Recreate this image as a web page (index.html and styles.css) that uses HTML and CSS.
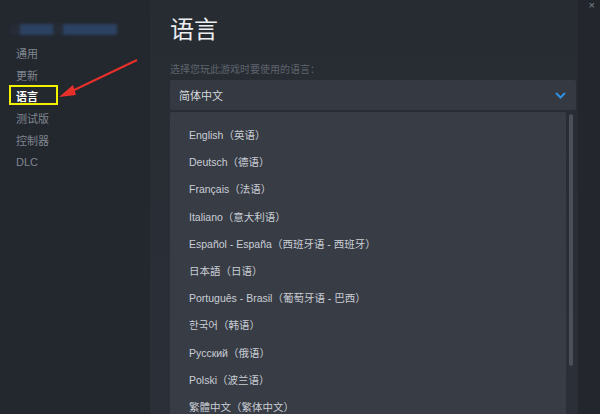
FILE: index.html
```html
<!DOCTYPE html>
<html lang="zh-CN">
<head>
    <meta charset="UTF-8">
    <meta name="viewport" content="width=device-width, initial-scale=1.0">
    <title>语言</title>
    <link rel="stylesheet" href="styles.css">
</head>
<body>
    <div class="window">
        <div class="sidebar">
            <div class="game-title">
                <span class="blur-block short"></span>
                <span class="blur-block long"></span>
            </div>
            <ul class="nav">
                <li class="nav-item">通用</li>
                <li class="nav-item">更新</li>
                <li class="nav-item active"><span class="highlight">语言</span></li>
                <li class="nav-item">测试版</li>
                <li class="nav-item">控制器</li>
                <li class="nav-item">DLC</li>
            </ul>
        </div>

        <div class="main">
            <h1 class="title">语言</h1>
            <p class="label">选择您玩此游戏时要使用的语言：</p>

            <div class="select">
                <span>简体中文</span>
                <svg class="chevron" width="11" height="7" viewBox="0 0 11 7">
                    <path d="M1 1 L5.5 5.5 L10 1" fill="none" stroke="#2f8fe0" stroke-width="2"/>
                </svg>
            </div>

            <div class="dropdown">
                <ul class="options">
                    <li>English（英语）</li>
                    <li>Deutsch（德语）</li>
                    <li>Français（法语）</li>
                    <li>Italiano（意大利语）</li>
                    <li>Español - España（西班牙语 - 西班牙）</li>
                    <li>日本語（日语）</li>
                    <li>Português - Brasil（葡萄牙语 - 巴西）</li>
                    <li>한국어（韩语）</li>
                    <li>Русский（俄语）</li>
                    <li>Polski（波兰语）</li>
                    <li>繁體中文（繁体中文）</li>
                </ul>
                <div class="scroll-track">
                    <div class="scroll-thumb"></div>
                </div>
            </div>
        </div>

        <div class="edge">
            <span class="close">×</span>
        </div>

        <!-- annotation arrow -->
        <svg class="arrow" width="600" height="414" viewBox="0 0 600 414">
            <line x1="137" y1="60" x2="70" y2="92" stroke="#e8302a" stroke-width="2"/>
            <polygon points="59,97 73,85 76,95" fill="#e8302a"/>
        </svg>
    </div>
</body>
</html>
```

FILE: styles.css
```css
html, body {
    margin: 0;
    padding: 0;
    height: 100%;
    overflow: hidden;
}
body {
    font-family: 'Liberation Sans', 'Noto Sans CJK SC', sans-serif;
    background-color: #22262d;
    color: #c6ccd4;
}
.window {
    position: relative;
    display: flex;
    height: 414px;
    width: 600px;
}
.sidebar {
    width: 150px;
    background-color: #23272e;
    padding-top: 24px;
    box-sizing: border-box;
}
.game-title {
    display: flex;
    gap: 10px;
    margin-left: 10px;
    width: 107px;
    height: 11px;
    padding-left: 10px;
    box-sizing: border-box;
    background-color: #262c36;
    border-radius: 2px;
    filter: blur(1.5px);
}
.blur-block {
    display: block;
    height: 11px;
    background-color: #2b4262;
}
.blur-block.short {
    width: 33px;
}
.blur-block.long {
    width: 54px;
}
.nav {
    list-style: none;
    margin: 9px 0 0 0;
    padding: 0;
}
.nav-item {
    height: 21.7px;
    line-height: 21.7px;
    padding-left: 16px;
    font-size: 11px;
    color: #7f868f;
}
.nav-item.active {
    color: #ffffff;
    font-weight: bold;
    position: relative;
}
.highlight {
    position: relative;
}
.highlight::after {
    content: '';
    position: absolute;
    left: -7px;
    top: -6px;
    width: 45px;
    height: 16px;
    border: 2px solid #f2f200;
}
.main {
    width: 428px;
    padding: 0 2px 0 20px;
    box-sizing: border-box;
    background: linear-gradient(180deg, #272b32 0%, #2b2f37 100%);
}
.title {
    margin: 15px 0 0 0;
    height: 30px;
    line-height: 30px;
    font-size: 24px;
    font-weight: normal;
    color: #eceef0;
}
.label {
    margin: 18px 0 0 0;
    font-size: 10px;
    line-height: 14px;
    color: #5e646d;
}
.select {
    display: flex;
    align-items: center;
    justify-content: space-between;
    margin-top: 3px;
    height: 30px;
    padding: 0 10px 0 9px;
    background-color: #353941;
    border-radius: 2px;
    font-size: 11px;
    color: #d5d9de;
}
.dropdown {
    display: flex;
    margin-top: 2px;
}
.options {
    list-style: none;
    margin: 0;
    padding: 10px 0 0 19px;
    width: 396px;
    height: 310px;
    box-sizing: border-box;
    background-color: #383c45;
    border-radius: 2px 2px 0 0;
}
.options li {
    height: 27.2px;
    line-height: 27.2px;
    font-size: 10.5px;
    color: #c9ced5;
    white-space: nowrap;
}
.scroll-track {
    margin-left: 3px;
    width: 4px;
    padding-top: 2px;
}
.scroll-thumb {
    height: 252px;
    background-color: #4a4f59;
    border-radius: 2px;
}
.edge {
    flex: 1;
    background-color: #23262d;
    position: relative;
}
.close {
    position: absolute;
    top: 0;
    right: 5px;
    font-size: 11px;
    line-height: 11px;
    color: #7d838b;
}
.arrow {
    position: absolute;
    left: 0;
    top: 0;
    pointer-events: none;
}
```
